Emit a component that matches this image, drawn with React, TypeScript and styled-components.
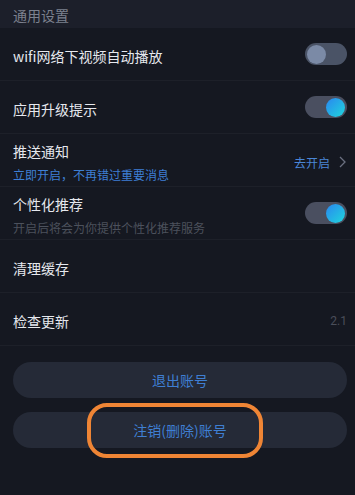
import styled, { createGlobalStyle } from "styled-components";

const GlobalStyle = createGlobalStyle`
  html, body {
    margin: 0;
    padding: 0;
    background: #151821;
  }
  body {
    font-family: "Noto Sans CJK SC", "Noto Sans", sans-serif;
  }
`;

type Item = {
  title: string;
  sub?: string;
  subBlue?: boolean;
  toggle?: "on" | "off";
  link?: string;
  value?: string;
};

const items: Item[] = [
  { title: "wifi网络下视频自动播放", toggle: "off" },
  { title: "应用升级提示", toggle: "on" },
  { title: "推送通知", sub: "立即开启，不再错过重要消息", subBlue: true, link: "去开启" },
  { title: "个性化推荐", sub: "开启后将会为你提供个性化推荐服务", toggle: "on" },
  { title: "清理缓存" },
  { title: "检查更新", value: "2.1" },
];

function App() {
  return (
    <Page>
      <GlobalStyle />
      <SectionHeader>通用设置</SectionHeader>
      <List>
        {items.map((item) => (
          <Row key={item.title}>
            <TextBox>
              <Title>{item.title}</Title>
              {item.sub && <Sub $blue={item.subBlue}>{item.sub}</Sub>}
            </TextBox>
            {item.toggle && (
              <Toggle $on={item.toggle === "on"}>
                <Knob $on={item.toggle === "on"} />
              </Toggle>
            )}
            {item.link && (
              <LinkBox>
                {item.link}
                <svg width="7" height="12" viewBox="0 0 7 12">
                  <path d="M1 1 L6 6 L1 11" fill="none" stroke="#6b7080" strokeWidth="1.3" />
                </svg>
              </LinkBox>
            )}
            {item.value && <Value>{item.value}</Value>}
          </Row>
        ))}
      </List>
      <Buttons>
        <PillButton>退出账号</PillButton>
        <Marked>
          <PillButton>注销(删除)账号</PillButton>
          <Annotation />
        </Marked>
      </Buttons>
    </Page>
  );
}

export default App;

const Page = styled.div`
  width: 355px;
  height: 495px;
  background: #151821;
  overflow: hidden;
`;

const SectionHeader = styled.div`
  height: 28px;
  padding: 2px 13px 0;
  box-sizing: border-box;
  display: flex;
  align-items: center;
  background: #1c1f2a;
  color: #7c818e;
  font-size: 14px;
`;

const List = styled.div`
  display: flex;
  flex-direction: column;
`;

const Row = styled.div`
  height: 48px;
  padding: 4px 8px 0 13px;
  display: flex;
  align-items: center;
  justify-content: space-between;
  border-bottom: 1px solid #1d2029;
`;

const TextBox = styled.div`
  display: flex;
  flex-direction: column;
  gap: 6px;
`;

const Title = styled.div`
  color: #e6e8ee;
  font-size: 14px;
  line-height: 20px;
`;

const Sub = styled.div<{ $blue?: boolean }>`
  color: ${({ $blue }) => ($blue ? "#3e7fd4" : "#4c515c")};
  font-size: 12px;
  line-height: 16px;
`;

const Toggle = styled.div<{ $on: boolean }>`
  width: 42px;
  height: 22px;
  margin-top: -4px;
  border-radius: 11px;
  background: ${({ $on }) => ($on ? "#4a4f60" : "#4a5366")};
  display: flex;
  align-items: center;
  justify-content: ${({ $on }) => ($on ? "flex-end" : "flex-start")};
  padding: 0 2px;
  box-sizing: border-box;
`;

const Knob = styled.div<{ $on: boolean }>`
  width: 19px;
  height: 19px;
  border-radius: 50%;
  background: ${({ $on }) =>
    $on ? "linear-gradient(135deg, #2a86f0 0%, #1fd6dc 100%)" : "#7b8aa6"};
`;

const LinkBox = styled.div`
  display: flex;
  align-items: center;
  gap: 9px;
  padding-right: 1px;
  color: #4a86d6;
  font-size: 12px;
`;

const Value = styled.div`
  color: #4a4e5a;
  font-size: 12px;
  font-family: "Roboto", "Noto Sans", sans-serif;
`;

const Buttons = styled.div`
  padding: 16px 8px 0 13px;
  display: flex;
  flex-direction: column;
  gap: 14px;
`;

const Marked = styled.div`
  position: relative;
`;

const PillButton = styled.div`
  height: 36px;
  border-radius: 18px;
  background: #252a37;
  color: #3f7fd3;
  font-size: 14px;
  display: flex;
  align-items: center;
  justify-content: center;
`;

const Annotation = styled.div`
  position: absolute;
  left: 74px;
  top: -9px;
  width: 176px;
  height: 55px;
  box-sizing: border-box;
  border: 4px solid #ef8535;
  border-radius: 20px;
  pointer-events: none;
`;
